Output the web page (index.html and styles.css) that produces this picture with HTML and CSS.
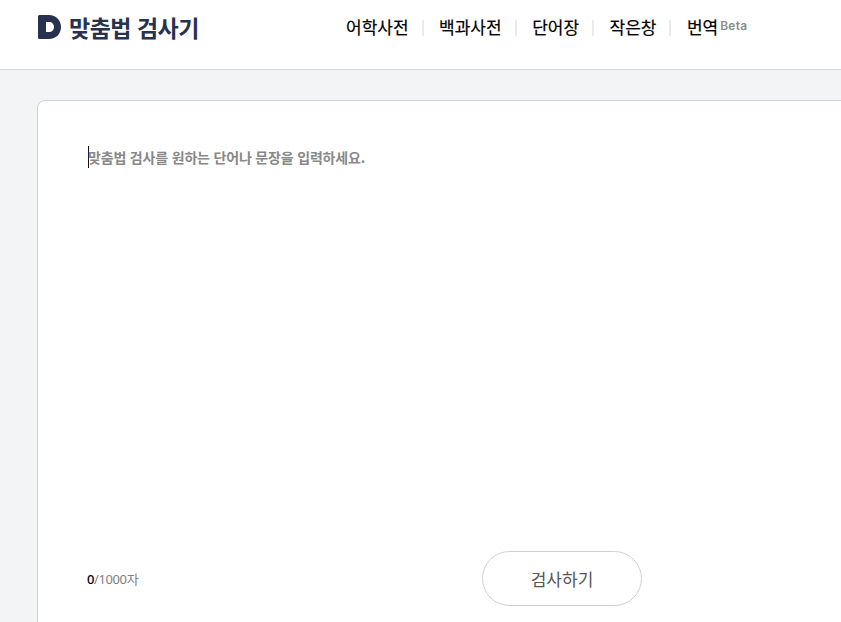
FILE: index.html
```html
<!DOCTYPE html>
<html lang="ko">
<head>
<meta charset="utf-8">
<title>맞춤법 검사기</title>
<link rel="stylesheet" href="styles.css">
</head>
<body>
<header class="header">
  <a class="brand">
    <svg class="logo" width="23" height="24" viewBox="0 0 23 24"><path fill-rule="evenodd" fill="#26324f" d="M1.500 0H11C18 0 23 5 23 12S18 24 11 24H1.500C.6 24 0 23.400 0 22.500V1.500C0 .6 .6 0 1.500 0ZM8 7V17H11C14 17 16 14.900 16 12S14 7 11 7Z"/></svg>
    <span class="brand-name">맞춤법 검사기</span>
  </a>
  <nav class="nav">
    <a class="nav-item">어학사전</a>
    <a class="nav-item">백과사전</a>
    <a class="nav-item">단어장</a>
    <a class="nav-item">작은창</a>
    <a class="nav-item nav-last">번역<span class="beta">Beta</span></a>
  </nav>
</header>
<main class="main">
  <section class="card">
    <div class="input-area">
      <span class="caret"></span>
      <span class="placeholder">맞춤법 검사를 원하는 단어나 문장을 입력하세요.</span>
    </div>
    <div class="footer">
      <div class="count"><span class="count-now">0</span>/1000자</div>
      <button class="check-btn">검사하기</button>
    </div>
  </section>
</main>
</body>
</html>
```
FILE: styles.css
```css
* { box-sizing: border-box; }
html, body { margin: 0; height: 100%; overflow: hidden; }
body {
  background: #f3f4f6;
  font-family: "Noto Sans CJK KR", "Noto Sans", sans-serif;
  color: #000;
}
.header {
  height: 70px;
  background: #fff;
  border-bottom: 1px solid #d9d9d9;
  display: flex;
  padding-left: 38px;
}
.brand {
  display: flex;
  align-items: center;
  gap: 8px;
  height: 54px;
  width: 308px;
  flex: none;
}
.brand-name {
  font-size: 23px;
  font-weight: 700;
  color: #26324f;
  letter-spacing: -0.5px;
}
.nav {
  display: flex;
  align-items: center;
  height: 54px;
}
.nav-item {
  font-size: 17px;
  line-height: 24px;
  padding-right: 15px;
  margin-right: 15.500px;
  position: relative;
  white-space: nowrap;
  -webkit-text-stroke: 0.2px #000;
}
.nav-item::after {
  content: "";
  position: absolute;
  right: 0;
  top: 5px;
  width: 2px;
  height: 16px;
  background: #e8eaee;
}
.nav-last::after { display: none; }
.beta {
  font-family: "Inter", sans-serif;
  font-size: 12px;
  line-height: 0;
  font-weight: 600;
  letter-spacing: 0.2px;
  color: #8c8c8c;
  margin-left: 2px;
  vertical-align: 4px;
  -webkit-text-stroke: 0;
}
.main { padding: 30px 0 0 37px; }
.card {
  width: 1000px;
  height: 560px;
  background: #fff;
  border: 1px solid #d2d2d2;
  border-radius: 8px;
  padding: 45px 50px 0 49px;
  display: flex;
  flex-direction: column;
}
.input-area {
  height: 405px;
  display: flex;
  align-items: flex-start;
}
.caret {
  width: 1px;
  height: 22px;
  background: #111;
  flex: none;
  margin-left: 1px;
  margin-right: -1px;
}
.placeholder {
  font-size: 14px;
  line-height: 22px;
  font-weight: 700;
  color: #888;
  letter-spacing: -0.18px;
}
.footer {
  display: flex;
  align-items: center;
  height: 55px;
}
.count {
  font-size: 13px;
  color: #808080;
  width: 395px;
  flex: none;
  font-family: "Noto Sans", "Noto Sans CJK KR", sans-serif;
  letter-spacing: -0.4px;
}
.count-now { color: #000; font-weight: 500; }
.check-btn {
  width: 160px;
  height: 55px;
  background: #fff;
  border: 1px solid #d0d0d0;
  border-radius: 28px;
  font-family: inherit;
  font-size: 17px;
  color: #555;
  padding: 0;
}
```
